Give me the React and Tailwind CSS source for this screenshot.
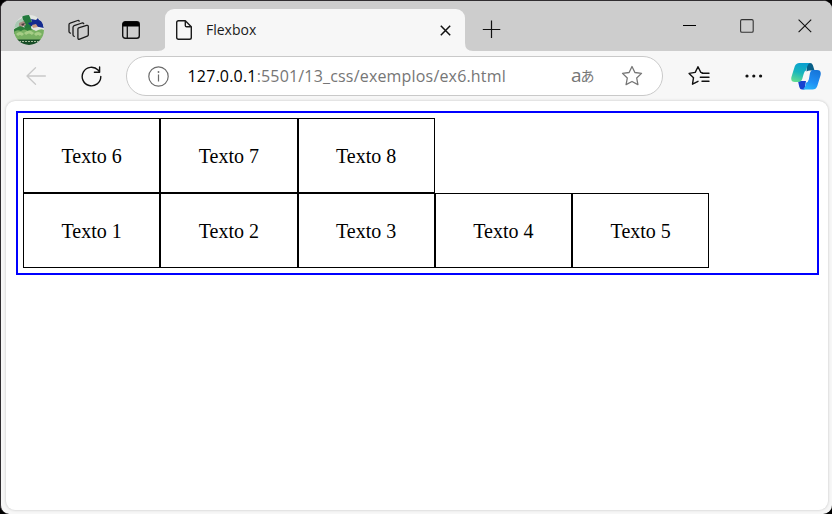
const ui = "font-['Open_Sans','Noto_Sans',sans-serif]";

function Avatar() {
  return (
    <svg className="ml-[13px] mt-[14px] size-[30px] shrink-0" viewBox="0 0 30 30">
      <defs>
        <clipPath id="face"><circle cx="15" cy="15" r="15" /></clipPath>
      </defs>
      <g clipPath="url(#face)">
        <rect width="30" height="30" fill="#e3e7e2" />
        <path d="M8 0h7l3 7-1 6-6 1-2-7z" fill="#237a3d" />
        <path d="M0 8l8-5 2 3-5 6-5 1z" fill="#aac9b3" />
        <path d="M5 8l5-2 2 4-4 2-3-1z" fill="#a98d82" />
        <path d="M7 9l4-1-2 3z" fill="#473c3d" />
        <path d="M14 8l4-1-1-3 5 1 2-2 1 2 5 2-1 3 1 3-5-1-8-1z" fill="#142b8f" />
        <path d="M18 10l4-1 2 3-5 1z" fill="#c99c82" />
        <path d="M0 14l6-3 6 2 4-1 3 3-1 4H0z" fill="#2c7d38" />
        <path d="M0 17q3-3 7-1 3-3 7 0 4-3 8 0 5-3 8-1v10H0z" fill="#78b062" />
        <path d="M3 20q3-3 6 0M11 19q4-4 8 0M21 20q3-3 6 0" stroke="#a6cd86" strokeWidth="3" fill="none" />
        <path d="M0 24.500h30V30H0z" fill="#184d27" />
        <path d="M5 26.500h20" stroke="#a6bd9d" strokeWidth="1" strokeDasharray="2 1" />
      </g>
    </svg>
  );
}

function TitleBar() {
  return (
    <div className="flex h-[50px] shrink-0 items-start bg-[#cdcdcd]">
      <Avatar />
      <svg className="ml-6 mt-[18px] h-[22px] w-[22px] shrink-0" viewBox="0 0 22 22" fill="none" stroke="#1b1b1b" strokeWidth="1.3" strokeLinejoin="round" strokeLinecap="round">
        <path d="M10.6 8.8l8-2.4q1.7-.4 1.7 1.2v8.1q0 1-1 1.4l-7.6 3q-1.8.6-1.8-1.1V10.200q0-1.100.7-1.400z" />
        <path d="M6.300 17.300q-1.300 0-1.300-1.500V8.400q0-1.400 1.200-1.800L14 4q1.200-.3 1.700.6" />
        <path d="M2.500 14.200Q1 14 1 12.500V5.800q0-1.400 1.200-1.700L9.700 1.500q1-.3 1.500.6" />
      </svg>
      <svg className="ml-[32px] mt-[20px] size-[18px] shrink-0" viewBox="0 0 18 18" fill="none">
        <rect x=".7" y=".7" width="16.600" height="16.600" rx="2.500" stroke="#111" strokeWidth="1.400" />
        <path d="M.7 3.200Q.7.7 3.200.7h11.600q2.500 0 2.500 2.500V5.500H.7z" fill="#000" />
        <path d="M5.300 5v12" stroke="#111" strokeWidth="1.300" />
      </svg>
      <svg className="ml-[18px] mt-[42px] size-2 shrink-0" viewBox="0 0 8 8"><path d="M8 0v8H0q8 0 8-8z" fill="#f7f7f7" /></svg>
      <div className="-ml-px mt-2 flex h-[42px] w-[300px] shrink-0 rounded-t-[9px] bg-[#f7f7f7]">
        <svg className="ml-[11px] mt-[11px] h-5 w-4 shrink-0" viewBox="0 0 16 20" fill="none" stroke="#1b1b1b" strokeWidth="1.400" strokeLinejoin="round">
          <path d="M2.500.7h6.800l6 6v10.800q0 1.800-1.800 1.800h-11Q.7 19.300.7 17.500v-15Q.7.7 2.500.7z" />
          <path d="M9.300.9v4.500q0 1.300 1.300 1.300h4.500" />
        </svg>
        <span className={`ml-[14px] mt-[11px] w-[234px] text-[14px] leading-5 text-[#1b1b1b] ${ui}`}>Flexbox</span>
        <svg className="mt-[16px] size-[11px] shrink-0" viewBox="0 0 11 11" stroke="#111" strokeWidth="1.500"><path d="M.8.8l9.400 9.400M10.200.8L.8 10.200" /></svg>
      </div>
      <svg className="mt-[42px] size-2 shrink-0" viewBox="0 0 8 8"><path d="M0 0v8h8q-8 0-8-8z" fill="#f7f7f7" /></svg>
      <svg className="ml-[9px] mt-[19px] size-[19px] shrink-0" viewBox="0 0 19 19" stroke="#111" strokeWidth="1.200"><path d="M9.500.5v17.500M.8 9.500h17.500" /></svg>
      <svg className="ml-auto mt-[24px] h-[2px] w-[13px]" viewBox="0 0 13 2"><path d="M0 .5h13" stroke="#000" /></svg>
      <svg className="ml-[44px] mt-[18px] size-[14px]" viewBox="0 0 14 14"><rect x=".6" y=".6" width="12.600" height="12.600" rx="1.300" fill="none" stroke="#333" strokeWidth="1.100" /></svg>
      <svg className="ml-[44px] mr-[20px] mt-[18px] size-[14px]" viewBox="0 0 14 14" stroke="#111" strokeWidth="1.100"><path d="M.6.6l12.600 12.600M13.200.6L.6 13.200" /></svg>
    </div>
  );
}

function Toolbar() {
  return (
    <div className="flex h-[50px] shrink-0 items-center">
      <svg className="ml-[25px] h-[18px] w-5 shrink-0" viewBox="0 0 20 18" fill="none" stroke="#c9c9c9" strokeWidth="1.300" strokeLinecap="round" strokeLinejoin="round"><path d="M9.500.7L1 9l8.500 8.300M1 9h18.400" /></svg>
      <svg className="ml-[34.500px] size-[21px] shrink-0" viewBox="0 0 21 21" fill="none" stroke="#111" strokeWidth="1.400" strokeLinecap="round" strokeLinejoin="round"><path d="M19.800 10.500a9.300 9.300 0 1 1-2.700-6.500l1.200 1.700" /><path d="M18.600 1v5.200h-5.200" /></svg>
      <div className="ml-[24.500px] flex h-10 w-[537px] shrink-0 items-center rounded-full border border-[#c9c9c9] bg-white">
        <svg className="ml-[21px] size-[21px] shrink-0" viewBox="0 0 21 21" fill="none" stroke="#6b6b6b" strokeWidth="1.200"><circle cx="10.500" cy="10.500" r="9.700" /><path d="M10.500 8.500v7" /><circle cx="10.500" cy="6" r=".9" fill="#6b6b6b" stroke="none" /></svg>
        <span className={`ml-[18.500px] w-[383.500px] shrink-0 whitespace-nowrap text-[16px] leading-6 tracking-[0.18px] text-[#767676] ${ui}`}><span className="text-black">127.0.0.1</span>:5501/13_css/exemplos/ex6.html</span>
        <span className="flex w-[24px] shrink-0 items-center text-[#767676]">
          <span className={`-mt-[3px] text-[19px] leading-6 ${ui}`}>a</span>
          <span className="-ml-px -mt-[2px] text-[14px] leading-6 font-['Noto_Sans_CJK_JP',sans-serif]">あ</span>
        </span>
        <svg className="ml-[26px] size-[22px] shrink-0" viewBox="0 0 22 22" fill="none" stroke="#767676" strokeWidth="1.300" strokeLinejoin="round"><path d="M11 1.500l2.900 6 6.600.9-4.800 4.600 1.200 6.600-5.900-3.100-5.900 3.100L6.300 13 1.500 8.400l6.600-.9z" /></svg>
      </div>
      <svg className="ml-[25px] h-[22px] w-[22px] shrink-0" viewBox="0 0 22 22" fill="none" stroke="#111" strokeWidth="1.400" strokeLinejoin="round" strokeLinecap="round"><path d="M14.200 7.600L12.800 7.400 10 1.700 7.200 7.400 1.100 8.400l4.400 4.300-1 6.500 5.500-2.900M14 8.300h7M12.300 12.300h8.700M14 16.300h7" /></svg>
      <svg className="ml-[35px] h-1 w-[18px] shrink-0" viewBox="0 0 18 4" fill="#111"><circle cx="2" cy="2" r="1.600" /><circle cx="8.800" cy="2" r="1.600" /><circle cx="15.600" cy="2" r="1.600" /></svg>
      <svg className="ml-[28px] h-[27px] w-[30px] shrink-0" viewBox="0 0 30 27">
        <defs>
          <linearGradient id="cpA" x1=".6" y1="0" x2=".3" y2="1"><stop stopColor="#0a9fd0" /><stop offset=".5" stopColor="#16b5bd" /><stop offset="1" stopColor="#62dc91" /></linearGradient>
          <linearGradient id="cpB" x1=".7" y1="0" x2=".3" y2="1"><stop stopColor="#1775d8" /><stop offset=".6" stopColor="#1f8ff5" /><stop offset="1" stopColor="#29b6f9" /></linearGradient>
        </defs>
        <path d="M16 0h3q2.200 0 2.900 2.300L23.500 7.500H19q-2 0-3.500 1z" fill="#085f88" />
        <path d="M7 18h8l-1.500 8.500H11q-2 0-2.700-2.500z" fill="#1742cf" />
        <path d="M8.500 0H19q-2 .5-2.800 3.500L15 7.500q-1.500.3-2.200 3l-1.500 5.300q-1 3.200-4.300 3.200H4Q-.8 19 .5 13.800L3.700 3.600Q4.900 0 8.500 0z" fill="url(#cpA)" />
        <path d="M21.500 7H26q4.800 0 3.500 5.500L26.300 23q-1.200 3.500-4.800 3.500H11.500q2-.5 2.800-3.500l1-3.500q1.700-.3 2.500-3L19 10q.8-3 2.500-3z" fill="url(#cpB)" />
      </svg>
    </div>
  );
}

function Item({ n }) {
  return (
    <div className="border border-black px-[37.500px] pb-[24px] pt-[26px] font-['Liberation_Serif',serif] text-[20px] leading-[23px] text-black">
      Texto {n}
    </div>
  );
}

export default function App() {
  return (
    <div className="h-[514px] w-[832px] overflow-hidden bg-black">
      <div className="flex h-full flex-col overflow-hidden rounded-[9px] border-l border-t border-[#302d30] bg-[#f7f7f7]">
        <TitleBar />
        <Toolbar />
        <main className="ml-[5px] mr-[4px] h-[409px] shrink-0 rounded-[9px] bg-white px-[10px] pt-[10px] shadow-[0_0_3px_rgba(0,0,0,0.22)]">
          <div className="flex h-[164px] w-[803px] flex-wrap-reverse content-start border-2 border-[#0000ff] p-[5px]">
            {[1, 2, 3, 4, 5, 6, 7, 8].map((n) => <Item key={n} n={n} />)}
          </div>
        </main>
      </div>
    </div>
  );
}
